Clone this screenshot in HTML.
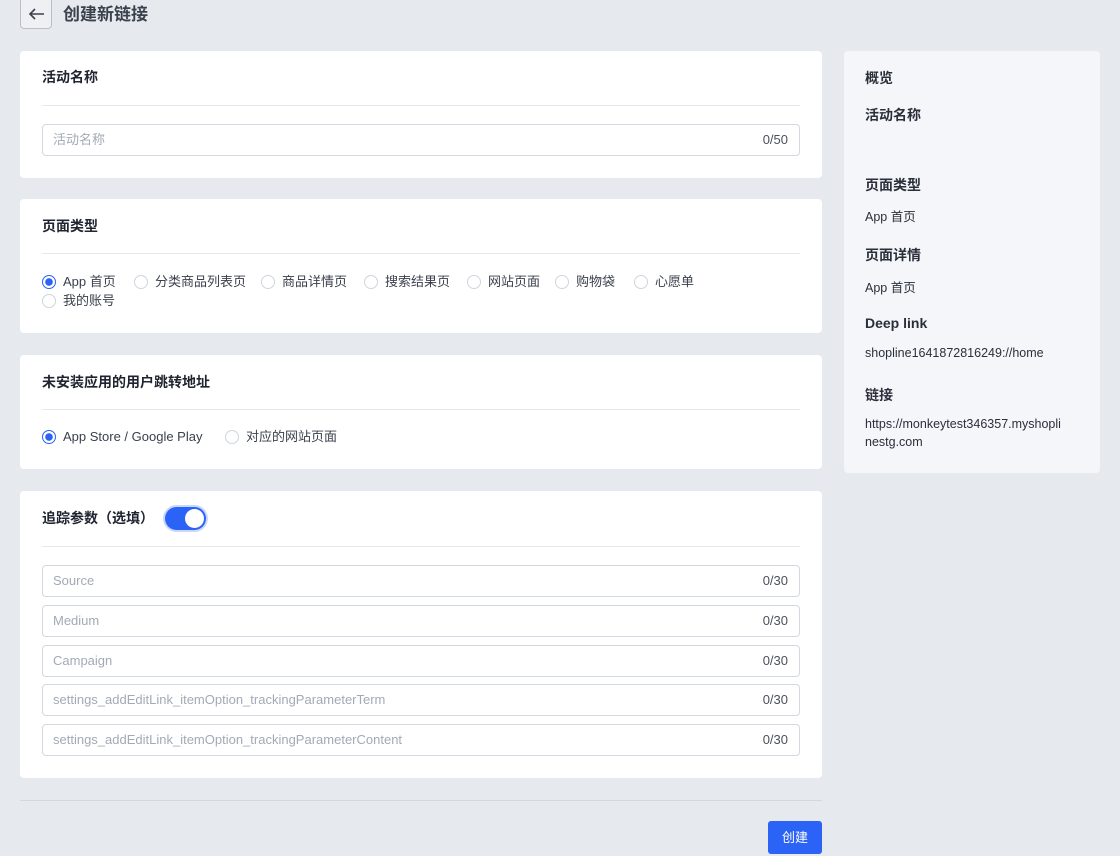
<!DOCTYPE html><html><head><meta charset="utf-8"><style>
*{box-sizing:border-box;margin:0;padding:0}
body{width:1120px;height:856px;background:#e6e9ee;font-family:"Liberation Sans","Noto Sans CJK SC",sans-serif;color:#2a2f3a;position:relative;overflow:hidden}
.a{position:absolute}
.card{position:absolute;left:20px;width:802px;background:#fff;border-radius:4px}
.t{position:absolute;left:22px;font-size:14px;font-weight:bold;color:#1f2430}
.hr{position:absolute;left:22px;right:22px;height:1px;background:#e6e8ec}
.in{position:absolute;left:22px;right:22px;height:32px;border:1px solid #d3d7df;border-radius:4px;font-size:13px;color:#a3a9b5;padding-left:10px;line-height:30px}
.in span{position:absolute;right:11px;color:#4a505c}
.r{position:absolute;font-size:13px;color:#3a404c;display:flex;align-items:center;white-space:nowrap;height:16px;line-height:16px}
.r i{width:14px;height:14px;border:1px solid #cfd4dc;border-radius:50%;margin-right:7px;display:inline-block;flex:none}
.r i.on{border:1px solid #2a63f5;background:radial-gradient(#2a63f5 3.5px,#fff 4px)}
.p{position:absolute;left:21px;font-size:12.5px;color:#2a2f3a}
.pb{position:absolute;left:21px;font-size:14px;font-weight:bold;color:#2a2f3a}
</style></head><body>
<div class="a" style="left:20px;top:-4px;width:32px;height:33px;border:1px solid #b9bec8;border-radius:4px;background:#eef0f3">
<svg width="30" height="30" viewBox="0 0 30 30" style="position:absolute;left:0;top:2px"><path d="M23 15H9M14 10l-5 5 5 5" stroke="#3a404c" stroke-width="1.6" fill="none"/></svg></div>
<div class="a" style="left:63px;top:0px;font-size:17px;font-weight:bold;color:#3a404c">创建新链接</div>

<div class="card" style="top:51px;height:127px">
<div class="t" style="top:16px">活动名称</div><div class="hr" style="top:54px"></div>
<div class="in" style="top:73px">活动名称<span>0/50</span></div></div>

<div class="card" style="top:199px;height:134px">
<div class="t" style="top:17px">页面类型</div><div class="hr" style="top:54px"></div>
<div class="r" style="left:22px;top:75px"><i class="on"></i>App 首页</div>
<div class="r" style="left:114px;top:75px"><i></i>分类商品列表页</div>
<div class="r" style="left:241px;top:75px"><i></i>商品详情页</div>
<div class="r" style="left:344px;top:75px"><i></i>搜索结果页</div>
<div class="r" style="left:447px;top:75px"><i></i>网站页面</div>
<div class="r" style="left:535px;top:75px"><i></i>购物袋</div>
<div class="r" style="left:614px;top:75px"><i></i>心愿单</div>
<div class="r" style="left:22px;top:94px"><i></i>我的账号</div></div>

<div class="card" style="top:355px;height:114px">
<div class="t" style="top:17px">未安装应用的用户跳转地址</div><div class="hr" style="top:54px"></div>
<div class="r" style="left:22px;top:74px"><i class="on"></i>App Store / Google Play</div>
<div class="r" style="left:205px;top:74px"><i></i>对应的网站页面</div></div>

<div class="card" style="top:491px;height:287px">
<div class="t" style="top:17px">追踪参数（选填）</div>
<div class="a" style="left:145px;top:16px;width:41px;height:23px;border-radius:12px;background:#2a63f5;box-shadow:0 0 0 2px #c9d7fb"><div class="a" style="right:2px;top:2px;width:19px;height:19px;border-radius:50%;background:#fff"></div></div>
<div class="hr" style="top:55px"></div>
<div class="in" style="top:74px">Source<span>0/30</span></div>
<div class="in" style="top:114px">Medium<span>0/30</span></div>
<div class="in" style="top:154px">Campaign<span>0/30</span></div>
<div class="in" style="top:193px">settings_addEditLink_itemOption_trackingParameterTerm<span>0/30</span></div>
<div class="in" style="top:233px">settings_addEditLink_itemOption_trackingParameterContent<span>0/30</span></div></div>

<div class="a" style="left:20px;top:800px;width:802px;height:1px;background:#d3d7de"></div>
<div class="a" style="left:768px;top:821px;width:54px;height:33px;background:#2a63f5;border-radius:3px;color:#fff;font-size:13px;text-align:center;line-height:33px">创建</div>

<div class="a" style="left:844px;top:51px;width:256px;height:422px;background:#f4f6fa;border-radius:4px">
<div class="pb" style="top:17px">概览</div>
<div class="pb" style="top:54px">活动名称</div>
<div class="pb" style="top:124px">页面类型</div>
<div class="p" style="top:155px">App 首页</div>
<div class="pb" style="top:194px">页面详情</div>
<div class="p" style="top:226px">App 首页</div>
<div class="pb" style="top:264px">Deep link</div>
<div class="p" style="top:295px">shopline1641872816249://home</div>
<div class="pb" style="top:334px">链接</div>
<div class="p" style="top:364px;line-height:18px">https://monkeytest346357.myshopli<br>nestg.com</div>
</div>
</body></html>
